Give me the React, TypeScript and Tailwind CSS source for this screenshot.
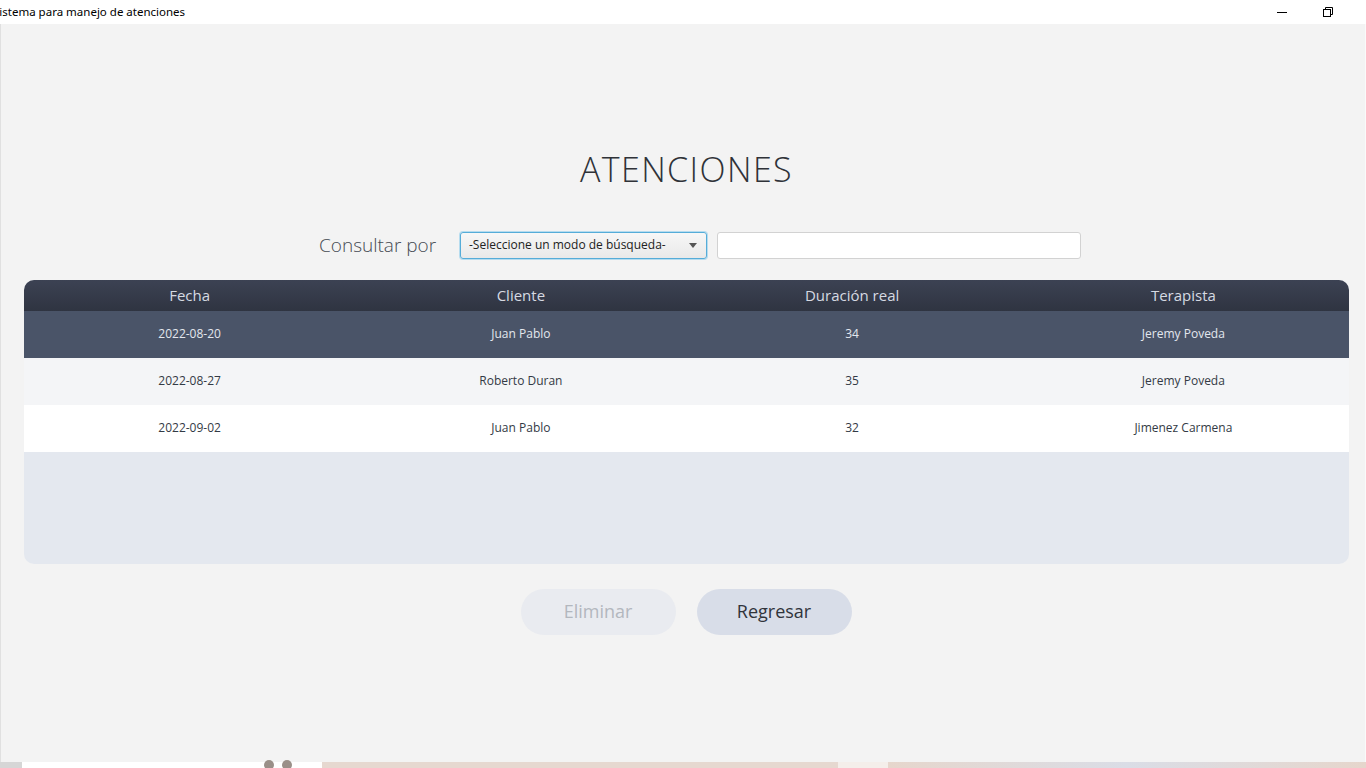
import React from 'react';

const rows = [
  { fecha: '2022-08-20', cliente: 'Juan Pablo', duracion: '34', terapista: 'Jeremy Poveda' },
  { fecha: '2022-08-27', cliente: 'Roberto Duran', duracion: '35', terapista: 'Jeremy Poveda' },
  { fecha: '2022-09-02', cliente: 'Juan Pablo', duracion: '32', terapista: 'Jimenez Carmena' },
];

const rowStyles = ['bg-[#4a5468] text-[#e3e7ee]', 'bg-[#f4f5f7] text-[#333a45]', 'bg-white text-[#333a45]'];

const App = () => {
  return (
    <div className="w-[1366px] h-[768px] flex flex-col bg-white overflow-hidden font-['Open_Sans',sans-serif]">
      {/* window title bar */}
      <div className="h-6 shrink-0 flex items-center justify-between bg-white">
        <span className="text-[11.5px] text-black -ml-[7px] font-['Noto_Sans',sans-serif]">Sistema para manejo de atenciones</span>
        <div className="flex items-center h-full">
          <div className="w-[46px] h-full flex items-center justify-center">
            <div className="w-[10px] h-px bg-black" />
          </div>
          <div className="w-[46px] h-full flex items-center justify-center mr-[15px]">
            <svg width="10" height="10" viewBox="0 0 10 10" fill="none" stroke="black" strokeWidth="1">
              <rect x="0.5" y="2.5" width="7" height="7" />
              <path d="M2.5 2.5V0.5H9.5V7.5H7.5" />
            </svg>
          </div>
        </div>
      </div>

      {/* content */}
      <div className="flex-1 flex flex-col items-center bg-[#f3f3f3] border-l border-[#e0e0e0] border-r border-r-[#fafafa]">
        <h1 className="mt-[125px] ml-[7px] text-[34px] leading-[40px] font-light tracking-[1.4px] text-[#2f3238]">ATENCIONES</h1>

        <div className="mt-[42px] flex items-center w-full pl-[318px]">
          <span className="text-[19px] font-light text-[#454a52] w-[141px]">Consultar por</span>
          <div className="w-[247px] h-[27px] rounded-[3px] border border-[#55acd8] shadow-[0_0_0_1px_#b6dcef] bg-gradient-to-b from-[#f7f7f7] to-[#e9e9e9] flex items-center justify-between pl-[8px] pr-[9px]">
            <span className="text-[12px] text-[#222]">-Seleccione un modo de búsqueda-</span>
            <svg width="8" height="5" viewBox="0 0 8 5"><path d="M0 0H8L4 5Z" fill="#555" /></svg>
          </div>
          <div className="ml-[10px] w-[364px] h-[27px] rounded-[3px] border border-[#d2d2d2] bg-white" />
        </div>

        <div className="mt-[20px] w-[1325px] ml-[7px] rounded-[10px] overflow-hidden bg-[#e4e8ef] flex flex-col h-[284px]">
          <div className="h-[31px] grid grid-cols-4 bg-gradient-to-b from-[#3c4253] to-[#2f3441] text-[15px] text-[#d6dae2] items-center">
            <div className="text-center">Fecha</div>
            <div className="text-center">Cliente</div>
            <div className="text-center">Duración real</div>
            <div className="text-center">Terapista</div>
          </div>
          {rows.map((r, i) => (
            <div key={i} className={`h-[47px] grid grid-cols-4 items-center text-[12px] ${rowStyles[i]}`}>
              <div className="text-center">{r.fecha}</div>
              <div className="text-center">{r.cliente}</div>
              <div className="text-center">{r.duracion}</div>
              <div className="text-center">{r.terapista}</div>
            </div>
          ))}
        </div>

        <div className="mt-[25px] flex gap-[21px] ml-[6px]">
          <button className="w-[155px] h-[46px] rounded-full bg-[#e9ebf0] text-[18px] text-[#b3b7be]">Eliminar</button>
          <button className="w-[155px] h-[46px] rounded-full bg-[#d8dde8] text-[18px] text-[#30343b]">Regresar</button>
        </div>
      </div>

      {/* strip of desktop below the window */}
      <div className="h-[6px] shrink-0 flex">
        <div className="w-[22px] bg-[#d6d6d6]" />
        <div className="w-[300px] bg-white flex justify-end pr-[30px] gap-[8px]">
          <div className="w-[10px] h-[10px] rounded-full bg-[#9a8f88] mt-[-2px]" />
          <div className="w-[10px] h-[10px] rounded-full bg-[#9a8f88] mt-[-2px]" />
        </div>
        <div className="w-[516px] bg-[#e6d8d0]" />
        <div className="w-[50px] bg-[#f4eeea]" />
        <div className="flex-1 bg-gradient-to-r from-[#e6d6cc] via-[#dadde6] to-[#e6d6cc]" />
      </div>
    </div>
  );
};

export default App;
